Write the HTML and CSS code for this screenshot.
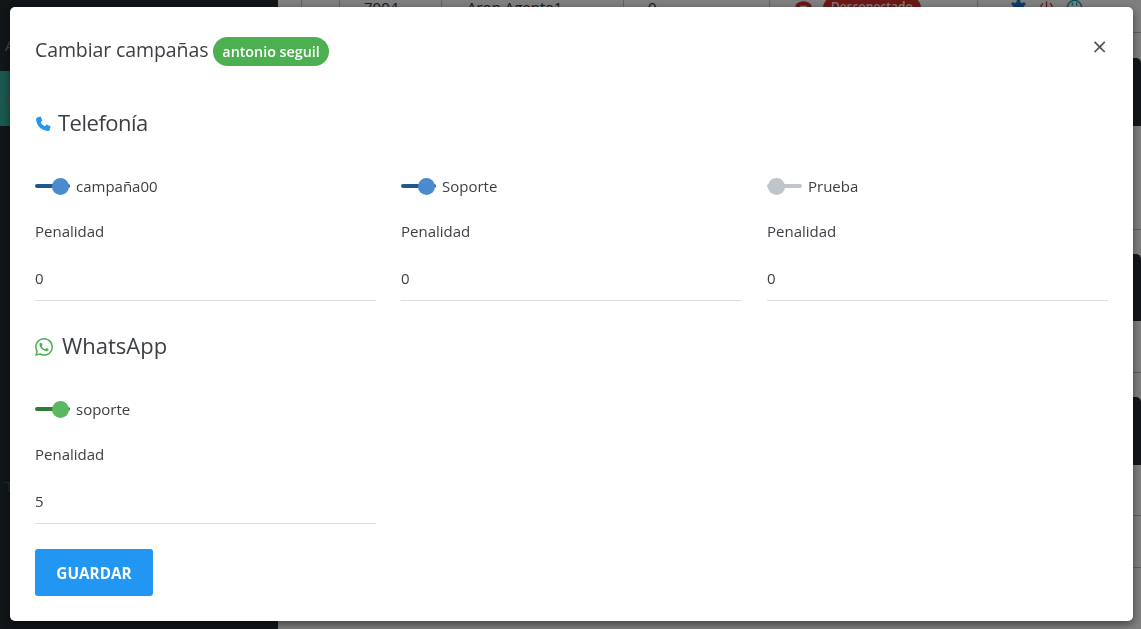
FILE: index.html
```html
<!DOCTYPE html>
<html lang="es">
<head>
    <meta charset="UTF-8">
    <meta name="viewport" content="width=device-width, initial-scale=1.0">
    <title>Cambiar campañas</title>
    <link rel="stylesheet" href="styles.css">
</head>
<body>
    <div class="app">
        <aside class="sidebar">
            <div class="side-label">A</div>
            <div class="side-item">C</div>
            <div class="side-label side-label-low">T</div>
        </aside>
        <main class="content">
            <div class="agent-row">
                <div class="cell cell-check"></div>
                <div class="cell cell-gap"></div>
                <div class="cell cell-ext">7004</div>
                <div class="cell cell-name">Aron Agente1</div>
                <div class="cell cell-num">0</div>
                <div class="cell cell-state">
                    <svg class="state-icon" viewBox="0 0 24 24"><path d="M2 10c5-6 15-6 20 0v4h-6v-3H8v3H2zM7 14h10l3 7H4z"/></svg>
                    <span class="state-pill">Desconectado</span>
                </div>
                <div class="cell cell-actions">
                    <svg class="act-icon act-gear" viewBox="0 0 24 24"><circle cx="12" cy="12" r="8"/><circle cx="12" cy="3" r="2.5"/><circle cx="4.5" cy="7" r="2.5"/><circle cx="19.5" cy="7" r="2.5"/></svg>
                    <svg class="act-icon act-power" viewBox="0 0 24 24"><path d="M12 3v9M7 6a8 8 0 1 0 10 0"/></svg>
                    <svg class="act-icon act-face" viewBox="0 0 24 24"><circle cx="12" cy="12" r="10"/><path d="M9 5v4M15 5v4"/></svg>
                </div>
            </div>
            <div class="right-tabs">
                <div class="row-line row-a"></div>
                <div class="side-tab tab-a"></div>
                <div class="row-line row-b"></div>
                <div class="side-tab tab-b"></div>
                <div class="row-line row-c"></div>
                <div class="side-tab tab-c"></div>
                <div class="row-line row-d"></div>
                <div class="row-line row-e"></div>
            </div>
        </main>
    </div>

    <div class="backdrop">
        <div class="modal">
            <div class="modal-head">
                <h5 class="modal-title">Cambiar campañas <span class="badge">antonio seguil</span></h5>
                <span class="close">&times;</span>
            </div>

            <h4 class="channel channel-phone">
                <svg class="channel-icon" viewBox="0 0 24 24"><path d="M4 3L8 2l2.5 6L8 10c1 3 3 5 6 6l2-2.5 6 2.5-1 4c-.5 2-2 2.500-3 2.500C9 22 2 15 1.500 6c0-1.500 1-2.500 2.500-3z"/></svg>
                Telefonía
            </h4>
            <div class="camp-grid">
                <div class="camp">
                    <label class="switch-row"><span class="switch on"></span>campaña00</label>
                    <div class="field-label">Penalidad</div>
                    <div class="field-value">0</div>
                </div>
                <div class="camp">
                    <label class="switch-row"><span class="switch on"></span>Soporte</label>
                    <div class="field-label">Penalidad</div>
                    <div class="field-value">0</div>
                </div>
                <div class="camp">
                    <label class="switch-row"><span class="switch"></span>Prueba</label>
                    <div class="field-label">Penalidad</div>
                    <div class="field-value">0</div>
                </div>
            </div>

            <h4 class="channel channel-wa">
                <svg class="channel-icon" viewBox="2 2 20 20"><path d="M12.04 2C6.58 2 2.13 6.45 2.13 11.91c0 1.75.46 3.45 1.32 4.95L2.05 22l5.25-1.38c1.45.79 3.08 1.21 4.74 1.21 5.46 0 9.91-4.45 9.91-9.91 0-2.65-1.03-5.14-2.9-7.01C17.18 3.03 14.69 2 12.04 2m.01 1.67c2.2 0 4.26.86 5.82 2.42 1.55 1.56 2.41 3.63 2.41 5.83 0 4.54-3.7 8.23-8.24 8.23-1.48 0-2.93-.39-4.19-1.15l-.3-.17-3.12.82.83-3.04-.2-.32c-.82-1.29-1.26-2.82-1.26-4.38.01-4.54 3.7-8.24 8.25-8.24M8.53 7.33c-.16 0-.43.06-.66.31C7.65 7.89 7 8.5 7 9.71c0 1.22.89 2.39 1 2.56.14.17 1.76 2.67 4.25 3.73.59.27 1.05.42 1.41.53.59.19 1.13.16 1.56.1.48-.07 1.46-.6 1.67-1.18.21-.58.21-1.07.15-1.18-.07-.1-.23-.16-.48-.27-.25-.14-1.47-.74-1.69-.82-.23-.08-.37-.12-.56.12-.16.25-.64.81-.78.97-.15.17-.29.19-.53.07-.26-.13-1.06-.39-2-1.23-.74-.66-1.23-1.47-1.38-1.72-.12-.24-.01-.39.11-.5.11-.11.27-.29.37-.44.13-.14.17-.25.25-.41.08-.17.04-.31-.02-.43-.06-.11-.56-1.35-.77-1.84-.2-.48-.4-.42-.56-.43-.14 0-.3-.01-.47-.01z"/></svg>
                WhatsApp
            </h4>
            <div class="camp-grid">
                <div class="camp">
                    <label class="switch-row"><span class="switch on green"></span>soporte</label>
                    <div class="field-label">Penalidad</div>
                    <div class="field-value">5</div>
                </div>
            </div>

            <button class="save-btn">GUARDAR</button>
        </div>
    </div>
</body>
</html>
```

FILE: styles.css
```css
html, body {
    margin: 0;
    height: 100%;
    overflow: hidden;
}
body {
    font-family: "Open Sans", "Noto Sans", Arial, sans-serif;
    font-size: 15px;
    color: #3b3f43;
    background: #fff;
}
.app {
    display: flex;
    height: 629px;
    overflow: hidden;
}
.sidebar {
    width: 278px;
    flex-shrink: 0;
    background: #222c30;
    color: #8a9499;
}
.side-label {
    padding: 35px 0 0 5px;
    height: 36px;
    font-size: 15px;
}
.side-label-low {
    padding-top: 350px;
    color: #5d686e;
}
.side-item {
    height: 55px;
    padding-left: 6px;
    line-height: 55px;
    background: #35b39f;
    font-size: 15px;
}
.content {
    flex: 1;
    display: flex;
    flex-direction: column;
    background: #fff;
}
.agent-row {
    display: flex;
    height: 10px;
    overflow: hidden;
}
.cell {
    height: 40px;
    margin-top: -3px;
    border-right: 1px solid #c8c8c8;
    box-sizing: border-box;
    display: flex;
    gap: 10px;
    align-items: flex-start;
    color: #333;
}
.cell-check { width: 24px; }
.cell-gap { width: 38px; }
.cell-ext { width: 102px; padding-left: 24px; }
.cell-name { width: 182px; padding-left: 25px; }
.cell-num { width: 146px; padding-left: 24px; }
.cell-state { width: 208px; padding-left: 24px; }
.cell-actions { flex: 1; border-right: 0; padding-left: 32px; gap: 11px; }
.state-icon {
    width: 19px;
    height: 19px;
    fill: #d9312b;
}
.state-pill {
    height: 22px;
    padding: 1px 8px 0;
    border-radius: 11px;
    background: #d9312b;
    color: #fff;
    font-weight: 600;
    font-size: 12px;
}
.act-icon { width: 17px; height: 17px; margin-top: 2px; fill: none; stroke-width: 2; }
.act-gear { fill: #1976d2; }
.act-power { stroke: #d9312b; }
.act-face { stroke: #13a5b5; }
.right-tabs {
    display: flex;
    flex-direction: column;
    flex: 1;
    align-items: flex-end;
}
.row-line {
    width: 100%;
    height: 1px;
    background: #c4c4c4;
}
.side-tab {
    width: 100px;
    background: #232e33;
    border-radius: 0 5px 0 0;
}
.row-a { margin-top: 22px; }
.tab-a { height: 68px; margin-top: 25px; }
.row-b { margin-top: 103px; }
.tab-b { height: 67px; margin-top: 24px; }
.row-c { margin-top: 51px; }
.tab-c { height: 68px; margin-top: 24px; }
.row-d { margin-top: 50px; }
.row-e { margin-top: 51px; }

.backdrop {
    position: fixed;
    inset: 0;
    display: flex;
    padding: 7px 8px 8px 10px;
    box-sizing: border-box;
    background: rgba(0,0,0,0.5);
}
.modal {
    flex: 1;
    padding: 0 25px;
    background: #fff;
    border-radius: 5px;
    box-shadow: 0 3px 9px rgba(0,0,0,0.5);
}
.modal-head {
    display: flex;
    justify-content: space-between;
    align-items: center;
    height: 87px;
}
.modal-title {
    margin: 0;
    font-size: 19.5px;
    font-weight: 400;
    letter-spacing: -0.1px;
}
.badge {
    display: inline-block;
    padding: 0 9px;
    line-height: 29px;
    border-radius: 15px;
    background: #4caf50;
    color: #fff;
    font-size: 14.3px;
    font-weight: 600;
    letter-spacing: 0;
}
.close {
    font-size: 26px;
    line-height: 1;
    font-weight: 400;
    color: #555;
    margin: -10px 1px 0 0;
}
.channel {
    display: flex;
    align-items: center;
    height: 58px;
    padding-bottom: 2px;
    box-sizing: border-box;
    margin: 0;
    font-size: 22px;
    font-weight: 400;
}
.channel-icon {
    margin-top: 3px;
}
.channel-phone {
    gap: 6px;
    letter-spacing: -0.5px;
}
.channel-phone .channel-icon {
    width: 17px;
    height: 17px;
    fill: #2196f3;
}
.channel-wa {
    gap: 9px;
    margin-top: 16px;
}
.channel-wa .channel-icon {
    width: 18px;
    height: 18px;
    fill: #4caf50;
}
.camp-grid {
    display: grid;
    grid-template-columns: repeat(3, 341px);
    column-gap: 25px;
}
.camp {
    padding-top: 24px;
}
.switch-row {
    display: flex;
    align-items: center;
    gap: 6px;
    height: 20px;
}
.switch {
    position: relative;
    width: 35px;
    height: 4px;
    border-radius: 2px;
    background: #bfc5ca;
}
.switch::after {
    content: "";
    position: absolute;
    left: 1px;
    top: -6.5px;
    width: 17px;
    height: 17px;
    border-radius: 50%;
    background: #bfc5ca;
}
.switch.on { background: #22568f; }
.switch.on::after { left: 17px; background: #4a8bd0; }
.switch.on.green { background: #2e7d32; }
.switch.on.green::after { background: #5cb860; }
.field-label {
    margin-top: 25px;
    line-height: 20px;
}
.field-value {
    margin-top: 23px;
    height: 36px;
    line-height: 28px;
    border-bottom: 1px solid #ddd;
}
.save-btn {
    display: block;
    width: 118px;
    height: 47px;
    margin-top: 25px;
    border: 0;
    border-radius: 3px;
    background: #2196f3;
    color: #fff;
    font-family: inherit;
    font-size: 15.3px;
    font-weight: 700;
}
```
